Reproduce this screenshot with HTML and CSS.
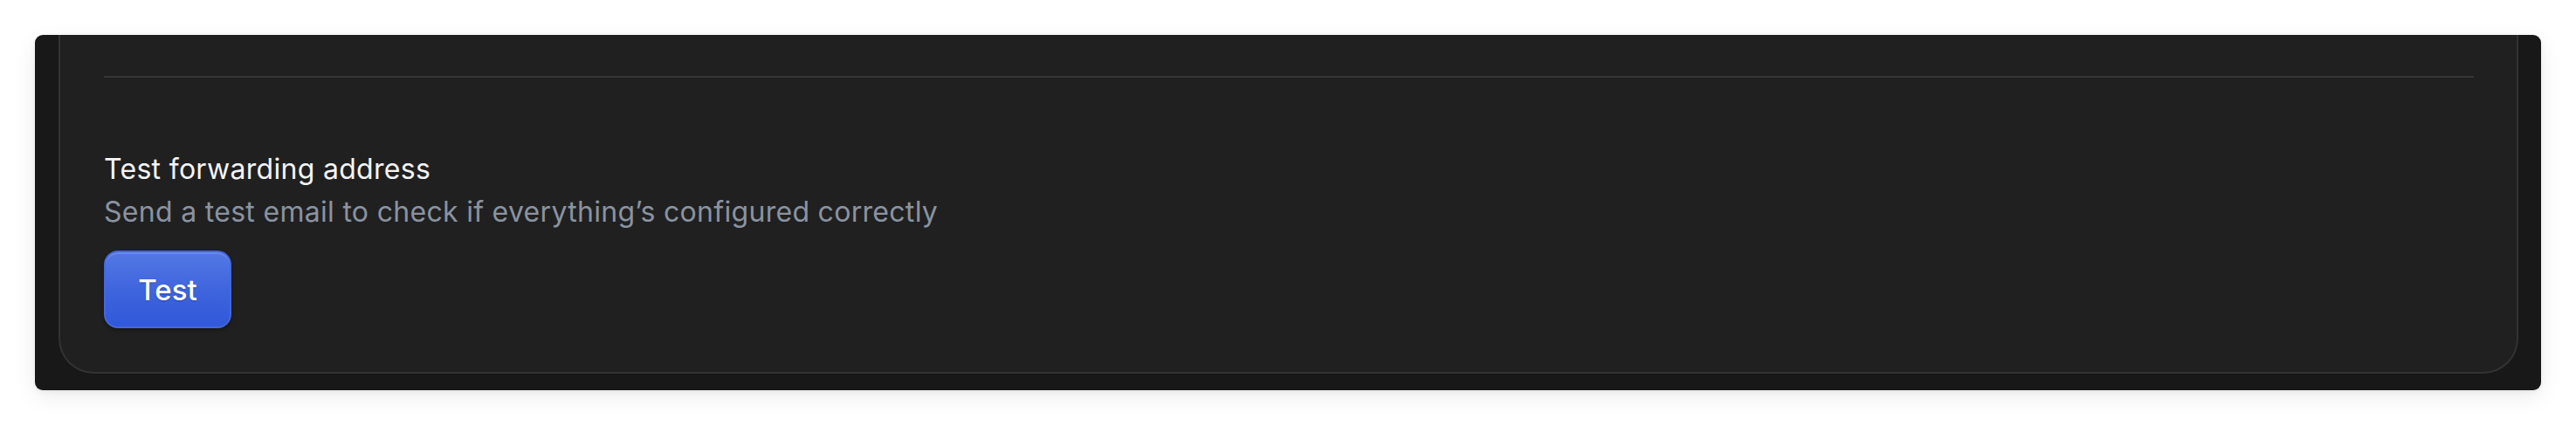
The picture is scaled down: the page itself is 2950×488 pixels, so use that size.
FILE: index.html
```html
<!DOCTYPE html>
<html lang="en">
<head>
<meta charset="utf-8">
<title>Test forwarding address</title>
<link rel="stylesheet" href="styles.css">
</head>
<body>
  <div class="frame">
    <section class="card">
      <hr class="divider">
      <div class="setting">
        <h3 class="setting-title">Test forwarding address</h3>
        <p class="setting-desc">Send a test email to check if everything’s configured correctly</p>
        <button class="btn-primary" type="button">Test</button>
      </div>
    </section>
  </div>
</body>
</html>
```

FILE: styles.css
```css
* { box-sizing: border-box; }

html, body {
  margin: 0;
  background: #ffffff;
}

body {
  padding: 40px;
  font-family: Inter, "Liberation Sans", Arial, sans-serif;
  -webkit-font-smoothing: antialiased;
}

.frame {
  height: 407px;
  background: #181818;
  border-radius: 9px;
  padding: 0 26px 20px 27px;
  overflow: hidden;
  box-shadow: 0 8px 28px rgba(0, 0, 0, 0.07), 0 2px 6px rgba(0, 0, 0, 0.06);
  display: flex;
  flex-direction: column;
}

.card {
  flex: 1;
  background: #202020;
  border: 2px solid #323232;
  border-top: none;
  border-radius: 0 0 40px 40px;
  padding: 47px 49px 50px 50px;
}

.divider {
  margin: 0;
  border: none;
  height: 2px;
  background: #363636;
}

.setting {
  padding-top: 81px;
}

.setting-title {
  margin: 0;
  font-size: 32px;
  line-height: 48px;
  font-weight: 400;
  letter-spacing: 0.3px;
  color: #f4f4f5;
}

.setting-desc {
  margin: 1px 0 0;
  font-size: 32px;
  line-height: 48px;
  font-weight: 400;
  letter-spacing: 0.3px;
  color: #8a93a1;
}

.btn-primary {
  margin-top: 20px;
  width: 146px;
  height: 89px;
  border-radius: 16px;
  border: 2px solid #4467dc;
  background: linear-gradient(180deg, #5378e4 0%, #3d63dd 55%, #3158d9 100%);
  box-shadow: inset 0 2px 0 rgba(255, 255, 255, 0.14), 0 2px 4px rgba(0, 0, 0, 0.35);
  color: #ffffff;
  font-family: inherit;
  font-size: 33px;
  font-weight: 500;
  text-shadow: 0 1px 2px rgba(0, 0, 0, 0.25);
  padding: 0;
  cursor: pointer;
}
```
